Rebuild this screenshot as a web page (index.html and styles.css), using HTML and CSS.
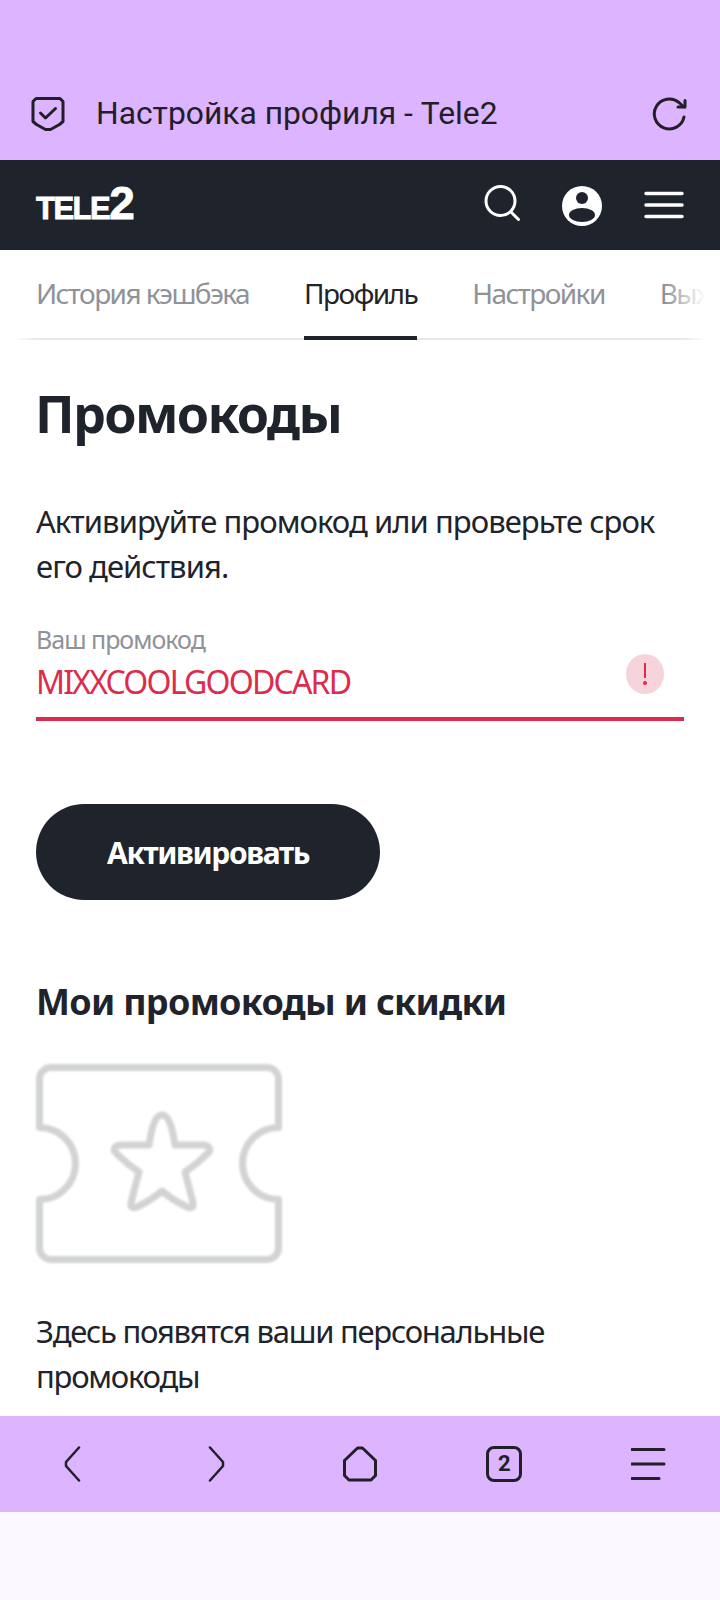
FILE: index.html
```html
<!DOCTYPE html>
<html lang="ru">
<head>
  <meta charset="UTF-8">
  <title>Настройка профиля - Tele2</title>
  <meta name="viewport" content="width=device-width, initial-scale=1.0">
  <link rel="stylesheet" href="styles.css">
</head>
<body>
  <div class="screen">
    <div class="url-bar">
      <svg class="url-shield" width="36" height="36" viewBox="0 0 36 36" fill="none" stroke="#211f28" stroke-width="3" stroke-linecap="round" stroke-linejoin="round">
        <path d="M6 2.500h24l3 3v20l-3.500 3-9 5h-5l-9-5-3.500-3v-20z"/>
        <path d="M10.500 17l5 5 10-9.500"/>
      </svg>
      <span class="url-title">Настройка профиля - Tele2</span>
      <svg class="url-reload" width="36" height="36" viewBox="0 0 36 36" fill="none" stroke="#211f28" stroke-width="3" stroke-linecap="round" stroke-linejoin="round">
        <path d="M32 21a15 15 0 1 1-5-14.500l5 4.500"/>
        <path d="M33 4.500v6.500h-7"/>
      </svg>
    </div>

    <header class="site-header">
      <a class="logo">TELE<span class="logo-two">2</span></a>
      <div class="header-icons">
        <svg class="icon-search" width="36" height="36" viewBox="0 0 36 36" fill="none" stroke="#fff" stroke-width="3" stroke-linecap="round">
          <circle cx="16.500" cy="16" r="14.500"/>
          <path d="M27 27l7.500 7.500"/>
        </svg>
        <svg class="icon-user" width="40" height="40" viewBox="0 0 40 40">
          <circle cx="20" cy="20" r="20" fill="#fff"/>
          <circle cx="20" cy="12" r="6" fill="#1f232b"/>
          <ellipse cx="20" cy="29" rx="13" ry="7" fill="#1f232b"/>
        </svg>
        <svg width="40" height="32" viewBox="0 0 40 32" stroke="#fff" stroke-width="3.500" stroke-linecap="round">
          <path d="M2 4.500h36M2 16h36M2 27.500h36"/>
        </svg>
      </div>
    </header>

    <nav class="tabs">
      <a class="tab">История кэшбэка</a>
      <a class="tab tab-active">Профиль</a>
      <a class="tab">Настройки</a>
      <a class="tab">Выход</a>
      <div class="tabs-fade"></div>
    </nav>

    <main class="content">
      <h1>Промокоды</h1>
      <p class="lead">Активируйте промокод или проверьте срок его действия.</p>

      <div class="field">
        <label class="field-label">Ваш промокод</label>
        <div class="field-row">
          <span class="field-value">MIXXCOOLGOODCARD</span>
          <span class="field-error">
            <svg width="4" height="22" viewBox="0 0 4 22" fill="#dc2c4c">
              <path d="M1 0h2v15H1z"/>
              <circle cx="2" cy="20" r="2"/>
            </svg>
          </span>
        </div>
      </div>

      <button class="btn">Активировать</button>

      <h2>Мои промокоды и скидки</h2>

      <svg class="ticket" width="246" height="199" viewBox="0 0 246 199" fill="none" stroke="#d2d3d5" stroke-width="7" stroke-linejoin="round">
        <path d="M15 3.500h216a11.500 11.500 0 0 1 11.500 11.500v48.500a36 36 0 0 0 0 72v48.500a11.500 11.500 0 0 1-11.500 11.500H15a11.500 11.500 0 0 1-11.500-11.500v-48.500a36 36 0 0 0 0-72V15A11.500 11.500 0 0 1 15 3.500z"/>
        <path d="M126 51c6 0 10 10 13 30h27c8 0 10 5 5 9c-6 6-13 12-22 18c3 12 6 22 8 31c1 5-3 6-8 3c-8-4-16-9-23-15c-7 6-15 11-23 15c-5 3-9 2-8-3c2-9 5-19 8-31c-9-6-16-12-22-18c-5-4-3-9 5-9h27c3-20 7-30 13-30z"/>
      </svg>

      <p class="empty-text">Здесь появятся ваши персональные промокоды</p>
    </main>

    <div class="bottom-bar">
      <svg width="36" height="36" viewBox="0 0 36 36" fill="none" stroke="#211f28" stroke-width="2.500" stroke-linecap="round" stroke-linejoin="round">
        <path d="M27 1.500L14 16v4l13 14.500"/>
      </svg>
      <svg width="36" height="36" viewBox="0 0 36 36" fill="none" stroke="#211f28" stroke-width="2.500" stroke-linecap="round" stroke-linejoin="round">
        <path d="M13 1.500L26 16v4L13 34.500"/>
      </svg>
      <svg width="36" height="36" viewBox="0 0 36 36" fill="none" stroke="#211f28" stroke-width="3" stroke-linecap="round" stroke-linejoin="round">
        <path d="M15.500 2h5l13 12.500v15L29 34H7l-4.500-4.500v-15z"/>
      </svg>
      <span class="tabs-count">2</span>
      <svg width="36" height="36" viewBox="0 0 36 36" fill="none" stroke="#211f28" stroke-width="3" stroke-linecap="round">
        <path d="M1 3.500h32M1 18h32M1 32.500h27"/>
      </svg>
    </div>
    <div class="bottom-space"></div>
  </div>
</body>
</html>
```

FILE: styles.css
```css
* {
  box-sizing: border-box;
}
body {
  margin: 0;
  background: #fff;
  font-family: "Noto Sans", "Open Sans", sans-serif;
  color: #1f232b;
}
.screen {
  width: 720px;
  height: 1600px;
  display: flex;
  flex-direction: column;
  overflow: hidden;
}
.url-bar {
  height: 160px;
  flex: none;
  background: #ddb4ff;
  display: flex;
  align-items: center;
  padding: 67px 32px 0 30px;
  font-family: Roboto, sans-serif;
  color: #211f28;
}
.url-title {
  flex: 1;
  margin-left: 30px;
  font-size: 31.800px;
  margin-top: -2px;
}
.site-header {
  height: 90px;
  flex: none;
  background: #1f232b;
  display: flex;
  align-items: center;
  justify-content: space-between;
  padding: 0 36px;
}
.logo {
  font-family: "Liberation Sans", sans-serif;
  font-weight: bold;
  font-size: 31px;
  line-height: 40px;
  letter-spacing: -1.500px;
  color: #fff;
  -webkit-text-stroke: 0.8px #fff;
  margin-top: 2px;
}
.logo-two {
  font-size: 46px;
  letter-spacing: 0;
}
.header-icons {
  display: flex;
  align-items: center;
  gap: 42px;
}
.icon-search {
  margin-top: -4px;
}
.icon-user {
  margin-top: 2px;
}
.tabs {
  position: relative;
  height: 90px;
  flex: none;
  margin: 0 15px;
  padding-left: 21px;
  display: flex;
  gap: 55px;
  overflow: hidden;
  background: linear-gradient(to right, #fff, #e8e8ec 3%, #e8e8ec 97%, #fff) bottom / 100% 2px no-repeat;
  white-space: nowrap;
}
.tab {
  height: 90px;
  padding-top: 24px;
  font-size: 28px;
  letter-spacing: -1.550px;
  color: #8f9299;
}
.tab-active {
  color: #1f232b;
  border-bottom: 4px solid #1f232b;
}
.tabs-fade {
  position: absolute;
  top: 0;
  right: 0;
  width: 40px;
  height: 86px;
  background: linear-gradient(to right, rgba(255,255,255,0), #fff);
}
.content {
  flex: 1;
  overflow: hidden;
  padding: 0 36px;
}
h1 {
  margin: 34px 0 0 -1px;
  font-size: 52px;
  line-height: 78px;
  font-weight: 700;
  letter-spacing: -1.650px;
}
.lead {
  margin: 47px 0 0;
  font-size: 31px;
  line-height: 45px;
  letter-spacing: -0.950px;
}
.field {
  margin-top: 34px;
  height: 98px;
  border-bottom: 4px solid #dc2c4c;
}
.field-label {
  display: block;
  font-size: 25px;
  line-height: 32px;
  letter-spacing: -1px;
  color: #8f9299;
}
.field-row {
  display: flex;
  align-items: center;
  justify-content: space-between;
  height: 44px;
  margin-top: 4px;
}
.field-value {
  font-size: 32px;
  letter-spacing: -1.800px;
  color: #dc2c4c;
}
.field-error {
  width: 38px;
  height: 40px;
  margin: -15px 20px 0 0;
  border-radius: 50%;
  background: #f7d4dc;
  display: flex;
  align-items: center;
  justify-content: center;
}
.btn {
  display: block;
  width: 344px;
  height: 96px;
  margin-top: 83px;
  border: none;
  border-radius: 48px;
  background: #1f232b;
  color: #fff;
  font-family: inherit;
  font-size: 30px;
  font-weight: 700;
  letter-spacing: -1.400px;
}
h2 {
  margin: 76px 0 0;
  font-size: 36px;
  line-height: 52px;
  font-weight: 700;
  letter-spacing: -0.700px;
}
.ticket {
  display: block;
  margin-top: 36px;
  filter: blur(1px);
}
.empty-text {
  margin: 46px 0 0;
  font-size: 31px;
  line-height: 45px;
  letter-spacing: -1.250px;
}
.bottom-bar {
  height: 96px;
  flex: none;
  background: #ddb4ff;
  display: flex;
  align-items: center;
  justify-content: space-between;
  padding: 0 53px 0 52px;
}
.tabs-count {
  width: 36px;
  height: 36px;
  border: 3px solid #211f28;
  border-radius: 8px;
  font-family: Roboto, sans-serif;
  font-size: 22px;
  font-weight: 700;
  line-height: 30px;
  text-align: center;
  color: #211f28;
}
.bottom-space {
  height: 88px;
  flex: none;
  background: #fbf7ff;
}
```
